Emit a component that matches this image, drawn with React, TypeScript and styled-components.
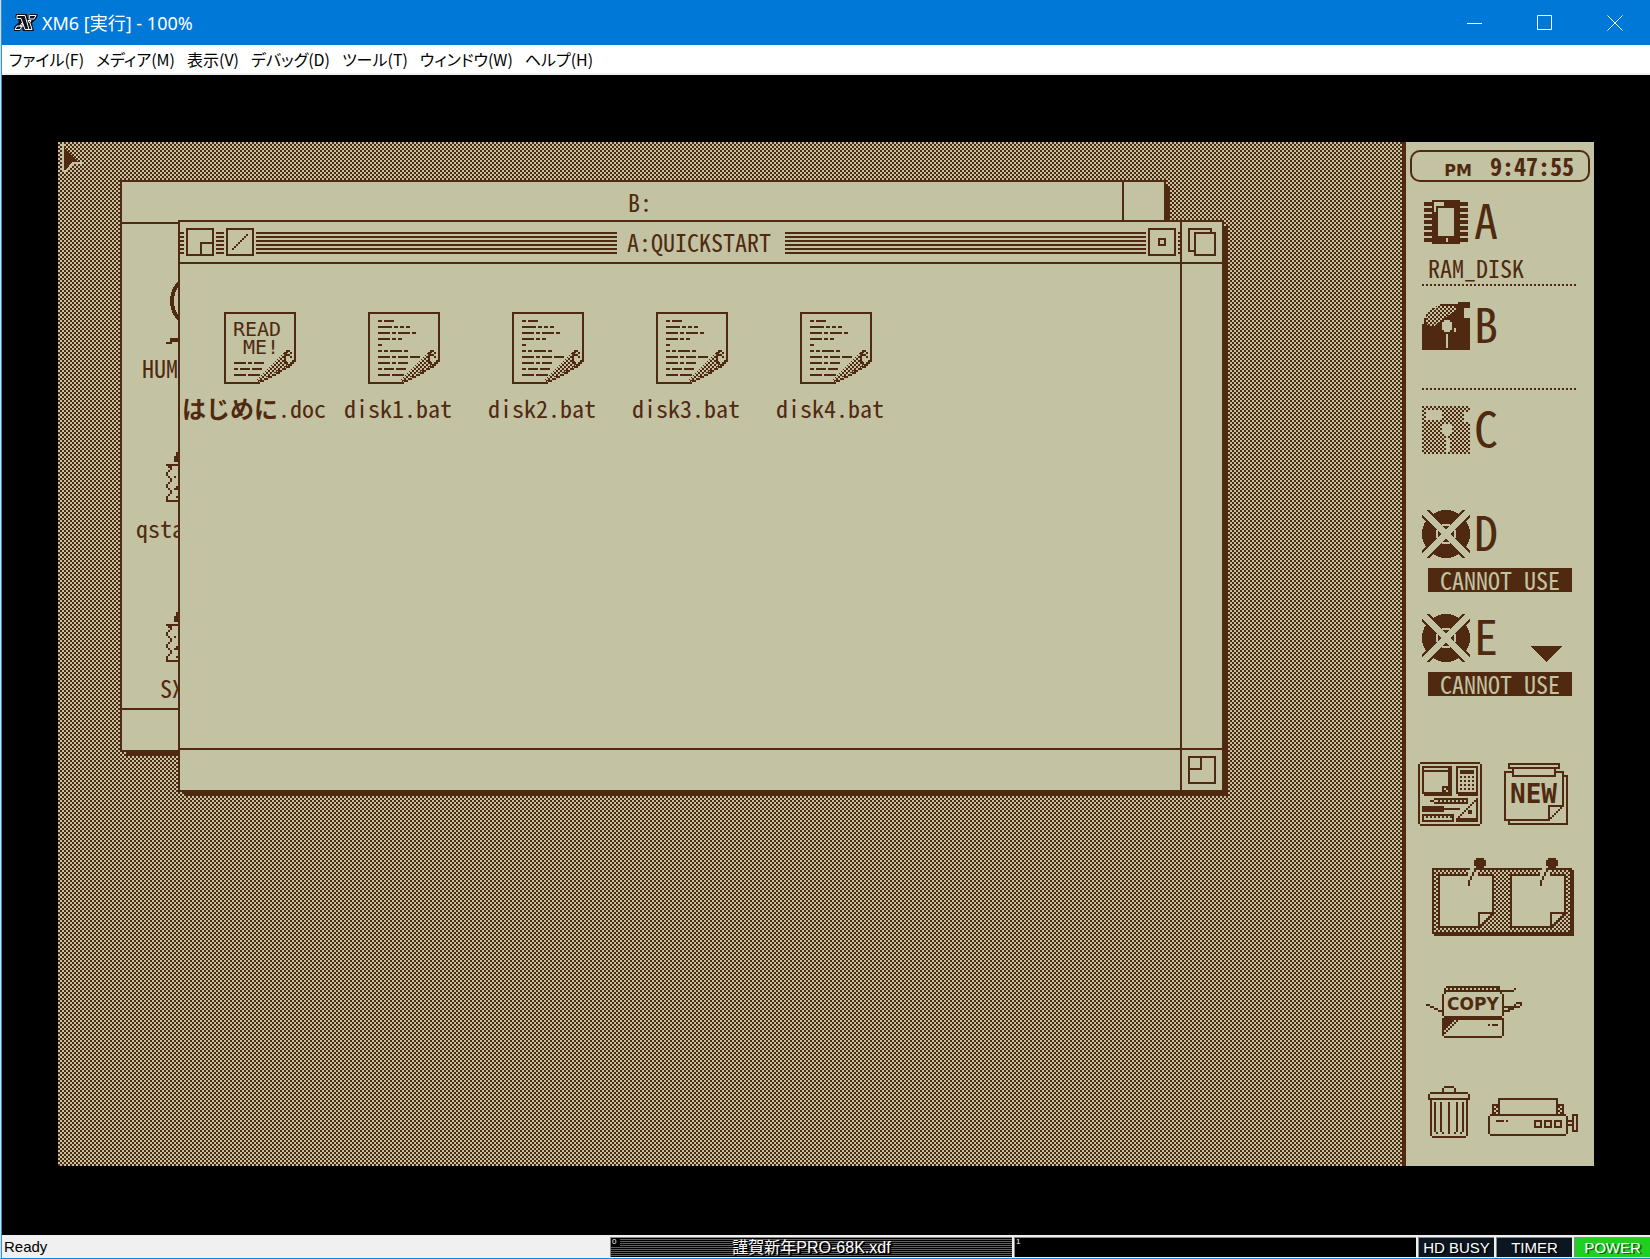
import React from "react";
import styled, { createGlobalStyle, css } from "styled-components";

const INK = "#502a10";
const PAPER = "#c3c3a3";
const MONO = `"Noto Sans Mono CJK JP", "Liberation Mono", monospace`;
const UI = `"Noto Sans", "Noto Sans CJK JP", sans-serif`;
const DITHER = `repeating-conic-gradient(${INK} 0 25%, ${PAPER} 0 50%) 0 0 / 4px 4px`;

const Global = createGlobalStyle`
  * { box-sizing: border-box; }
  body { margin: 0; background: #000; }
  button { border: 0; padding: 0; background: none; color: inherit; font: inherit; display: flex; }
  svg { display: block; }
`;

/* ---------- emulator window ---------- */

const Frame = styled.div`
  min-height: 100vh;
  display: flex;
  flex-direction: column;
  border-left: 1px solid #c4dff2;
  border-bottom: 1px solid #1883d7;
  box-shadow: inset 1px 0 0 #3d8fd0;
  padding-left: 1px;
  font-family: ${UI};
`;

const TitleBar = styled.header`
  height: 45px;
  background: #0078d7;
  color: #fff;
  display: flex;
  align-items: center;
  padding-left: 12px;
  gap: 4px;
`;

const AppTitle = styled.h1`
  margin: 0;
  flex: 1;
  font-size: 18px;
  line-height: 24px;
  font-weight: 400;
`;

const CaptionButtons = styled.div`
  display: flex;
`;

const CaptionButton = styled.button`
  width: 70px;
  height: 45px;
  align-items: center;
  justify-content: center;
`;

const MenuBar = styled.nav`
  height: 30px;
  background: #fff;
  border-bottom: 2px solid #f0f0f0;
  color: #000;
  display: flex;
  align-items: center;
  padding-left: 7px;
  gap: 12px;
`;

const MenuItem = styled.button`
  font-family: "Noto Sans CJK JP", sans-serif;
  font-feature-settings: "palt";
  font-size: 16px;
  line-height: 24px;
  white-space: nowrap;
`;

const Tube = styled.main`
  flex: 1;
  background: #000;
  padding: 67px 56px 69px;
  display: flex;
`;

const Screen = styled.div`
  flex: 1;
  display: flex;
  color: ${INK};
  font-family: ${MONO};
  font-size: 24px;
  line-height: 24px;
`;

const Workspace = styled.section`
  flex: 1;
  position: relative;
  overflow: hidden;
  background: ${DITHER};
`;

/* ---------- desktop windows ---------- */

const Win = styled.article<{ $x: number; $y: number }>`
  position: absolute;
  left: ${(p) => p.$x}px;
  top: ${(p) => p.$y}px;
  width: 1046px;
  height: 572px;
  border: 2px solid ${INK};
  background: ${INK};
  box-shadow: 5px 5px 0 -1px ${INK};
  display: grid;
  grid-template: 40px 1fr 40px / 1fr 40px;
  gap: 2px;
  > * {
    background: ${PAPER};
    min-width: 0;
  }
`;

const WinBar = styled.div`
  display: flex;
  align-items: center;
  justify-content: center;
  gap: 2px;
`;

const PlainBar = styled(WinBar)`
  padding: 0 36px 0 76px;
`;

const Stripes = styled.span<{ $w?: number }>`
  height: 24px;
  ${(p) => (p.$w ? css`width: ${p.$w}px;` : css`flex: 1;`)}
  background: repeating-linear-gradient(${PAPER} 0 2px, ${INK} 2px 4px);
`;

const WinTitle = styled.h2`
  margin: 0;
  padding: 0 12px 0 8px;
  font-size: 24px;
  line-height: 24px;
  font-weight: 400;
  white-space: nowrap;
`;

const Corner = styled.div`
  display: flex;
  align-items: center;
  justify-content: center;
`;

const FileRow = styled.ul`
  margin: 0;
  padding: 48px 0 0 2px;
  list-style: none;
  display: flex;
`;

const FileColumn = styled(FileRow)`
  flex-direction: column;
  gap: 52px;
`;

const FileItem = styled.li`
  width: 144px;
  display: flex;
  flex-direction: column;
  align-items: center;
  gap: 12px;
  > svg {
    margin-left: 12px;
  }
`;

const FileName = styled.span<{ $chars?: number }>`
  white-space: nowrap;
  ${(p) => p.$chars && css`width: ${p.$chars * 12}px;`}
`;

const Pointer = styled.span`
  position: absolute;
  left: 4px;
  top: 2px;
`;

/* ---------- side panel ---------- */

const Side = styled.aside`
  width: 192px;
  border-left: 4px solid ${INK};
  background: ${PAPER};
  padding-top: 8px;
`;

const Clock = styled.div`
  height: 32px;
  margin: 0 4px;
  padding-right: 14px;
  border: 2px solid ${INK};
  border-radius: 10px;
  display: flex;
  justify-content: flex-end;
  align-items: center;
  gap: 18px;
  font-weight: 700;
`;

const Meridiem = styled.span`
  font: 700 16px/16px "DejaVu Sans", sans-serif;
  padding-top: 10px;
`;

const Drive = styled.section<{ $line?: boolean }>`
  height: 104px;
  margin: 0 18px 0 16px;
  padding-top: 16px;
  background: ${(p) =>
    p.$line
      ? `repeating-linear-gradient(90deg, ${INK} 0 2px, ${PAPER} 2px 4px) 0 100% / 100% 2px no-repeat`
      : "none"};
`;

const DriveHead = styled.div`
  display: flex;
  align-items: flex-start;
  gap: 4px;
  height: 48px;
`;

const DriveLetter = styled.span`
  font-size: 48px;
  line-height: 40px;
`;

const ScrollDown = styled.button`
  align-self: flex-end;
  margin: 0 14px 0 auto;
`;

const Volume = styled.div<{ $off?: boolean }>`
  width: 144px;
  margin: 10px 0 0 6px;
  white-space: pre;
  ${(p) => p.$off && css`background: ${INK}; color: ${PAPER}; text-align: center;`}
`;

const Tools = styled.div`
  padding-top: 60px;
  display: flex;
  flex-direction: column;
  gap: 32px;
`;

const ToolRow = styled.div<{ $left: number; $gap?: number; $h?: number; $end?: boolean }>`
  padding-left: ${(p) => p.$left}px;
  min-height: ${(p) => p.$h ?? 0}px;
  display: flex;
  align-items: ${(p) => (p.$end ? "flex-end" : "center")};
  gap: ${(p) => p.$gap ?? 0}px;
`;

/* ---------- status bar ---------- */

const StatusBar = styled.footer`
  height: 23px;
  background: #f0f0f0;
  padding: 2px 0 1px 2px;
  display: flex;
  gap: 2px;
  font-family: "Liberation Sans", "Noto Sans CJK JP", sans-serif;
  font-size: 15px;
  line-height: 20px;
`;

const Ready = styled.span`
  width: 604px;
  color: #000;
`;

const Slot = styled.div<{ $disk?: boolean }>`
  flex: 1;
  position: relative;
  color: #fff;
  text-align: center;
  border-left: 1px solid #888;
  border-top: 1px solid #888;
  text-shadow: 1px 1px 0 #000, 2px 1px 0 #000;
  font-size: 16px;
  background: ${(p) => (p.$disk ? "repeating-linear-gradient(#000 0 1px, #606060 1px 2px)" : "#000")};
`;

const SlotNo = styled.span`
  position: absolute;
  left: 0;
  top: 0;
  padding: 0 4px 0 1px;
  background: #000;
  font-size: 8px;
  line-height: 8px;
`;

const Lamp = styled.div<{ $on?: boolean }>`
  width: 76px;
  color: #fff;
  text-align: center;
  white-space: nowrap;
  border-left: 1px solid #888;
  border-top: 1px solid #888;
  text-shadow: 2px 1px 0 ${(p) => (p.$on ? "#0a6a0a" : "#000")};
  background: ${(p) => (p.$on ? "#20d020" : "#0c1620")};
`;

/* ---------- pixel drawings: one art pixel is two screen pixels ---------- */

const rects = (list: string) =>
  list
    .trim()
    .split(/\s+/)
    .map((r) => {
      const [x, y, w, h] = r.split(",").map(Number);
      return `M${x} ${y}h${w}v${h ?? 1}h${-w}z`;
    })
    .join("");

const box = (x: number, y: number, w: number, h: number) =>
  `${x},${y},${w},1 ${x},${y + h - 1},${w},1 ${x},${y},1,${h} ${x + w - 1},${y},1,${h} `;

const every = (from: number, to: number, step: number, y: number) => {
  let s = "";
  for (let x = from; x <= to; x += step) s += `${x},${y},1,1 `;
  return s;
};

const diag = (x: number, y: number, n: number) => {
  let s = "";
  for (let i = 0; i < n; i++) s += `${x + i},${y - i},1,1 `;
  return s;
};

const P = ({ d, c = INK }: { d: string; c?: string }) => <path d={rects(d)} fill={c} />;

function Art({ w, h, children, over }: { w: number; h: number; children: React.ReactNode; over?: React.ReactNode }) {
  return (
    <svg width={w * 2} height={h * 2} viewBox={`0 0 ${w * 2} ${h * 2}`} shapeRendering="crispEdges" aria-hidden="true">
      <g transform="scale(2)">{children}</g>
      {over}
    </svg>
  );
}

const Defs = styled.svg`
  position: absolute;
`;

const DitherDef = () => (
  <Defs width="0" height="0" aria-hidden="true">
    <defs>
      <pattern id="dither" width="2" height="2" patternUnits="userSpaceOnUse">
        <path d="M0 0h1v1h-1zM1 1h1v1h-1z" fill={INK} />
      </pattern>
      <pattern id="dither-odd" width="2" height="2" patternUnits="userSpaceOnUse">
        <path d="M1 0h1v1h-1zM0 1h1v1h-1z" fill={INK} />
      </pattern>
    </defs>
  </Defs>
);

const Curl = () => (
  <>
    <path d="M16 35V34L31 19H35L34 21L32 23V25H34L33 26L17 35z" fill={PAPER} />
    <path d="M16 35V34L30 20H32L31 22V24L32 26L30 28L17 35z" fill="url(#dither-odd)" />
    <P
      d={
        "16,35,2 18,34,2 20,33,2 22,32,2 24,31,2 26,30,2 27,29,2 29,28,2 31,27,2 32,26,2 33,25,2 34,24,2 " +
        "31,19,2 33,20,1 30,20,1 31,21,1 30,22,1,3 31,25,1 32,21,1 33,22,1"
      }
    />
  </>
);

const DOC_FRAME = "0,0,36 0,0,1,36 35,0,1,25 0,35,17 ";

const DocIcon = () => (
  <Art w={36} h={36}>
    <P
      d={
        DOC_FRAME +
        "5,4,2 8,4,5 5,7,7 13,7,2 16,7,2 19,7,2 5,10,6 12,10,2 15,10,6 22,10,2 5,13,6 12,13,2 15,13,2 5,16,2 " +
        "5,19,2 8,19,2 11,19,6 18,19,2 5,22,6 12,22,2 15,22,5 21,22,5 5,25,6 12,25,2 15,25,5 5,28,2 8,28,5 14,28,5 5,31,6 12,31,6"
      }
    />
    <Curl />
  </Art>
);

const IconText = styled.text<{ $font: string }>`
  font: ${(p) => p.$font};
  fill: ${INK};
`;

const ReadMeIcon = () => (
  <Art
    w={36}
    h={36}
    over={
      <IconText $font='20px "DejaVu Sans Mono", monospace'>
        <tspan x="9" y="24">READ</tspan>
        <tspan x="19" y="42">ME!</tspan>
      </IconText>
    }
  >
    <P d={DOC_FRAME + "5,25,6 12,25,2 15,25,5 5,28,2 8,28,5 14,28,5 5,31,6 12,31,6"} />
    <Curl />
  </Art>
);

const HeadIcon = () => (
  <svg width="72" height="72" viewBox="0 0 72 72" shapeRendering="crispEdges" aria-hidden="true">
    <ellipse cx="20" cy="29" rx="14" ry="20" fill="none" stroke={INK} strokeWidth="4" />
    <path d="M0 70h4v-4h10v4h-8v2h-6z" fill={INK} />
  </svg>
);

const BagIcon = () => (
  <Art w={36} h={36}>
    <P d="5,10,4,5 4,12,5,3 0,16,9 1,17,2 2,18,1,1 1,19,1 0,20,1,2 1,22,1 2,23,1,2 1,25,1 0,26,1,2 1,28,1 2,29,1,2 1,31,1 0,32,1,3 0,34,9 4,22,1 5,27,2 4,28,2 5,32,1" />
  </Art>
);

const RamIcon = () => {
  const pins = [2, 5, 8, 11, 14, 17, 20].map((y) => `1,${y},4,2 19,${y},4,2`).join(" ");
  return (
    <Art w={24} h={24}>
      <P d={"5,1,14,22 " + pins} />
      <P c={PAPER} d="8,5,8,14 6,2,5,1 7,3,4,1 6,3,1,4 12,20,1,2" />
      <P d="7,4,4,1" />
    </Art>
  );
};

const FloppyIcon = () => (
  <Art w={24} h={24}>
    <path d="M0 11h1v-3h1v-2h1v-1h1v-1h1v-1h2v-1h2v-1h9v-1h6v3h-3v5h3v16h-24z" fill={INK} />
    <path d="M2 11V8L4 5L8 2H17V4L6 12H4z" fill={PAPER} />
    <path d="M2 11V8L4 5L8 2H17V4L6 12H4z" fill="url(#dither)" />
    <P c={PAPER} d="11,9,3,6 10,10,5,4 16,13,1,2 12,16,1,7" />
  </Art>
);

const GhostFloppyIcon = () => (
  <Art w={24} h={24}>
    <path d="M0 0h24v3h-3v5h3v16h-24z" fill="url(#dither)" />
    <P c={PAPER} d="2,2,8,5 11,9,3,6 10,10,5,4 12,16,2,7" />
  </Art>
);

const NoDiskIcon = () => (
  <Art w={24} h={24}>
    <circle cx="12" cy="12" r="12" fill={INK} />
    <path d="M1 1L23 23M23 1L1 23" stroke={INK} strokeWidth="5" />
    <P c={PAPER} d="10,7,4 9,8,1 14,8,1 10,16,4 7,10,1,4 16,10,1,4 8,9,1 15,9,1 8,14,1 15,14,1 9,15,1 14,15,1 10,10,4,4" />
    <path d="M0 0L24 24M24 0L0 24" stroke={PAPER} strokeWidth="3" />
  </Art>
);

const DeskIcon = () => (
  <Art w={32} h={32}>
    <P
      d={
        "1,0,30 0,1,1,30 1,31,30 31,1,1,30 2,2,14 2,2,1,14 2,4,13 15,2,2,15 3,15,14,2 12,12,3 12,12,1,3 13,14,1 14,13,1 " +
        "19,2,11 19,2,1,14 29,2,1,14 20,15,10,2 21,4,7,2 " +
        [7, 9, 11, 13].map((y) => every(21, 27, 2, y)).join("") +
        "8,18,17 8,20,17 24,18,1,3 6,19,2 " +
        every(10, 24, 2, 19) +
        "2,22,11,3 13,23,8 " +
        box(2, 26, 16, 4) +
        every(4, 16, 2, 27) +
        diag(19, 28, 10) +
        "29,18,1,12 19,28,11,2 25,24,2,2"
      }
    />
  </Art>
);

const NewIcon = () => (
  <Art w={32} h={31} over={<IconText x="6" y="40" $font='700 26px "DejaVu Sans Mono", monospace'>NEW</IconText>}>
    <P
      d={
        box(2, 0, 26, 3) +
        box(4, 2, 22, 5) +
        "0,4,4 26,4,4 0,4,1,25 0,28,23 29,4,1,18 22,21,8 22,21,1,8 30,6,2 31,6,1,25 2,30,30 2,29,1 " +
        diag(23, 27, 7)
      }
    />
  </Art>
);

const Note = ({ x }: { x: number }) => (
  <g transform={`translate(${x} 0)`}>
    <path d="M3 8h28v19l-8 8h-20z" fill={PAPER} />
    <P d={"3,8,15 23,8,8 3,8,1,27 30,8,1,20 3,34,21 23,27,8 23,27,1,8 " + diag(24, 33, 7)} />
    <P c={PAPER} d="18,6,5,3 19,5,3" />
    <P d="22,0,4 21,1,6,3 22,4,4 21,5,1,2 20,7,1,2 19,9,1,2 18,11,1,3" />
  </g>
);

const BoardIcon = () => (
  <Art w={71} h={40}>
    <path d="M0 5h70v33h-70z" fill={PAPER} />
    <path d="M0 5h70v33h-70z" fill="url(#dither)" />
    <P d="0,5,70 0,5,1,33 69,6,2,33 1,37,70,2" />
    <Note x={0} />
    <Note x={36} />
  </Art>
);

const CopyIcon = () => (
  <Art w={48} h={26} over={<IconText x="21" y="24" $font='700 17px "DejaVu Sans", sans-serif'>COPY</IconText>}>
    <P
      d={
        "10,0,27 9,1,1 36,1,1 9,2,35 44,1,1 " +
        every(11, 35, 2, 1) +
        "9,3,1 8,4,1,11 37,3,1 38,4,1,11 9,15,29,2 8,16,1,9 38,16,1,9 9,25,29 " +
        "9,17,5 9,18,4 9,19,3 9,20,2 9,21,1 " +
        diag(9, 23, 7) +
        "31,19,1 33,19,3 0,9,2 2,10,2 4,11,2 6,12,2 39,10,2 41,11,1 39,12,2 41,10,3 44,9,1 45,8,3 47,9,1 44,10,3 42,11,2 40,12,2"
      }
    />
  </Art>
);

const TrashIcon = () => (
  <Art w={21} h={26}>
    <P d="8,0,5 7,1,1,2 13,1,1,2 1,3,19 0,4,1,3 20,4,1,3 1,6,19 1,7,1,18 19,7,1,18 2,25,17 3,8,1,15 4,23,1 6,9,1,14 6,8,1 7,23,1 10,8,1,16 14,8,1,15 13,23,1 17,8,1,15 16,23,1" />
  </Art>
);

const PrinterIcon = () => (
  <Art w={45} h={20}>
    <P
      d={
        "5,0,30 5,0,1,8 34,0,1,8 2,3,3 2,3,1,5 3,5,1 4,4,1 4,6,1 3,7,1 35,3,3 37,3,1,5 36,5,1 35,4,1 35,6,1 36,7,1 " +
        "1,8,38 0,9,1,9 1,18,38 39,9,1,9 4,11,4 9,11,1 " +
        box(23, 11, 4, 4) +
        box(28, 11, 4, 4) +
        box(33, 11, 4, 4) +
        "40,11,2 40,13,2 " +
        box(42, 8, 3, 9)
      }
    />
  </Art>
);

const ZoomOutGlyph = () => (
  <Art w={14} h={14}>
    <P d={box(0, 0, 14, 14) + "7,7,7 7,7,1,7"} />
  </Art>
);
const SlashGlyph = () => (
  <Art w={14} h={14}>
    <P d={box(0, 0, 14, 14) + diag(3, 10, 8)} />
  </Art>
);
const DotGlyph = () => (
  <Art w={14} h={14}>
    <P d={box(0, 0, 14, 14) + box(5, 5, 4, 4)} />
  </Art>
);
const StackGlyph = () => (
  <Art w={14} h={14}>
    <P d={"0,0,12 0,0,1,12 11,0,1,3 0,11,4 " + box(3, 2, 11, 12)} />
  </Art>
);
const SizeGlyph = () => (
  <Art w={14} h={14}>
    <P d={box(0, 0, 14, 14) + "0,6,7 6,0,1,7"} />
  </Art>
);

const AppLogo = () => (
  <svg width="24" height="18" viewBox="0 0 24 18" aria-hidden="true">
    <path d="M2 0H13L14 4L16 0H24L23 4L18 9L20 17H9L8 13L6 17H0V13L5 8L3 4H1z" fill="#101018" />
    <path
      d="M3 1.5H11L15 15.5H11L7 4.5H3zM15.5 1.5H22L20 5H15zM8 12L6 15.5H1L3 12zM14 6.500L17 6.500L15.500 9zM8 9L9.500 12H6z"
      fill="none"
      stroke="#fff"
      strokeWidth="1"
    />
    <path d="M16 9L18 15.500H11" fill="none" stroke="#fff" strokeWidth="1" />
  </svg>
);

/* ---------- data ---------- */

const MENUS = ["ファイル(F)", "メディア(M)", "表示(V)", "デバッグ(D)", "ツール(T)", "ウィンドウ(W)", "ヘルプ(H)"];
const DISKS = ["disk1.bat", "disk2.bat", "disk3.bat", "disk4.bat"];

const DRIVES = [
  { id: "A", icon: <RamIcon />, volume: "RAM_DISK", line: true },
  { id: "B", icon: <FloppyIcon />, line: true },
  { id: "C", icon: <GhostFloppyIcon /> },
  { id: "D", icon: <NoDiskIcon />, volume: "CANNOT USE", off: true },
  { id: "E", icon: <NoDiskIcon />, volume: "CANNOT USE", off: true, more: true },
];

export default function App() {
  return (
    <Frame>
      <Global />
      <DitherDef />
      <TitleBar>
        <AppLogo />
        <AppTitle>XM6 [実行] - 100%</AppTitle>
        <CaptionButtons>
          <CaptionButton aria-label="Minimize">
            <svg width="16" height="16" stroke="#fff" fill="none"><path d="M0 8.5H15" /></svg>
          </CaptionButton>
          <CaptionButton aria-label="Maximize">
            <svg width="16" height="16" stroke="#fff" fill="none"><path d="M.5 .5h14v14h-14z" /></svg>
          </CaptionButton>
          <CaptionButton aria-label="Close">
            <svg width="16" height="16" stroke="#fff" fill="none"><path d="M.5 .5l15 15M15.5 .5l-15 15" /></svg>
          </CaptionButton>
        </CaptionButtons>
      </TitleBar>
      <MenuBar>
        {MENUS.map((m) => (
          <MenuItem key={m}>{m}</MenuItem>
        ))}
      </MenuBar>

      <Tube>
        <Screen>
          <Workspace>
            <Win $x={62} $y={38}>
              <PlainBar><WinTitle>B:</WinTitle></PlainBar>
              <Corner />
              <FileColumn>
                <FileItem><HeadIcon /><FileName $chars={9}>HUM</FileName></FileItem>
                <FileItem><BagIcon /><FileName $chars={10}>qsta</FileName></FileItem>
                <FileItem><BagIcon /><FileName $chars={6}>SX</FileName></FileItem>
              </FileColumn>
              <Corner />
              <div />
              <Corner />
            </Win>

            <Win $x={120} $y={78}>
              <WinBar>
                <Stripes $w={4} />
                <button aria-label="Shrink"><ZoomOutGlyph /></button>
                <Stripes $w={8} />
                <button aria-label="Close window"><SlashGlyph /></button>
                <Stripes />
                <WinTitle>A:QUICKSTART</WinTitle>
                <Stripes />
                <button aria-label="Iconify"><DotGlyph /></button>
                <Stripes $w={2} />
              </WinBar>
              <Corner><button aria-label="Send to back"><StackGlyph /></button></Corner>
              <FileRow>
                <FileItem><ReadMeIcon /><FileName><b>はじめに</b>.doc</FileName></FileItem>
                {DISKS.map((d) => (
                  <FileItem key={d}><DocIcon /><FileName>{d}</FileName></FileItem>
                ))}
              </FileRow>
              <Corner />
              <div />
              <Corner><button aria-label="Resize"><SizeGlyph /></button></Corner>
            </Win>

            <Pointer>
              <svg width="20" height="30" viewBox="0 0 20 30" shapeRendering="crispEdges" aria-hidden="true">
                <path d="M0 0h2v4L16 18h4v2h-8l-8 8h-4z" fill={PAPER} />
                <path d="M2 4L17 18H10L4 26H2z" fill={INK} />
              </svg>
            </Pointer>
          </Workspace>

          <Side>
            <Clock><Meridiem>PM</Meridiem><span>9:47:55</span></Clock>
            {DRIVES.map((d) => (
              <Drive key={d.id} $line={d.line}>
                <DriveHead>
                  {d.icon}
                  <DriveLetter>{d.id}</DriveLetter>
                  {d.more && (
                    <ScrollDown aria-label="More drives">
                      <svg width="32" height="16" viewBox="0 0 32 16" shapeRendering="crispEdges"><path d="M0 0h32L16 16z" fill={INK} /></svg>
                    </ScrollDown>
                  )}
                </DriveHead>
                {d.volume && <Volume $off={d.off}>{d.volume}</Volume>}
              </Drive>
            ))}
            <Tools>
              <ToolRow $left={12} $gap={22}>
                <button aria-label="Desk accessories"><DeskIcon /></button>
                <button aria-label="New note"><NewIcon /></button>
              </ToolRow>
              <ToolRow $left={26}>
                <button aria-label="Board"><BoardIcon /></button>
              </ToolRow>
              <ToolRow $left={20} $h={84}>
                <button aria-label="Copy"><CopyIcon /></button>
              </ToolRow>
              <ToolRow $left={22} $gap={18} $end>
                <button aria-label="Trash"><TrashIcon /></button>
                <button aria-label="Printer"><PrinterIcon /></button>
              </ToolRow>
            </Tools>
          </Side>
        </Screen>
      </Tube>

      <StatusBar>
        <Ready>Ready</Ready>
        <Slot $disk><SlotNo>0</SlotNo>謹賀新年PRO-68K.xdf</Slot>
        <Slot><SlotNo>1</SlotNo></Slot>
        <Lamp>HD BUSY</Lamp>
        <Lamp>TIMER</Lamp>
        <Lamp $on>POWER</Lamp>
      </StatusBar>
    </Frame>
  );
}
